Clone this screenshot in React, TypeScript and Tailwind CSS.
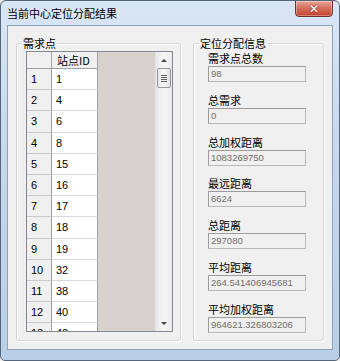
import React from 'react';

const rows = [
  ['1', '1'],
  ['2', '4'],
  ['3', '6'],
  ['4', '8'],
  ['5', '15'],
  ['6', '16'],
  ['7', '17'],
  ['8', '18'],
  ['9', '19'],
  ['10', '32'],
  ['11', '38'],
  ['12', '40'],
  ['13', '43'],
];

const fields = [
  ['需求点总数', '98'],
  ['总需求', '0'],
  ['总加权距离', '1083269750'],
  ['最远距离', '6624'],
  ['总距离', '297080'],
  ['平均距离', '264.541406945681'],
  ['平均加权距离', '964621.326803206'],
];

const cjk = { fontFamily: '"Noto Sans CJK SC", "Noto Sans", sans-serif' };

const GroupBox: React.FC<{ title: string; className: string; children: React.ReactNode }> = ({ title, className, children }) => (
  <div className={`relative border border-[#d5d5d5] rounded-[3px] shadow-[inset_1px_1px_0_#ffffff,1px_1px_0_#ffffff] ${className}`}>
    <span className="absolute left-[5px] top-[-9px] bg-[#f0f0f0] px-[1px] text-[11px] leading-[16px] text-black" style={cjk}>
      {title}
    </span>
    {children}
  </div>
);

const ScrollBar: React.FC = () => (
  <div className="w-[17px] h-full bg-gradient-to-r from-[#e8e8e8] via-[#f6f6f6] to-[#ececec] border-l border-[#e2e2e2] flex flex-col items-center">
    <div className="h-[16px] w-full flex items-center justify-center">
      <div className="w-0 h-0 border-l-[3px] border-r-[3px] border-b-[3px] border-l-transparent border-r-transparent border-b-[#404040]" />
    </div>
    <div className="w-[14px] h-[20px] rounded-[2px] border border-[#989898] bg-gradient-to-r from-[#e6e6e6] via-[#f8f8f8] to-[#dedede] flex flex-col items-center justify-center gap-[1px]">
      <div className="w-[6px] h-[1px] bg-[#606060]" />
      <div className="w-[6px] h-[1px] bg-[#606060]" />
      <div className="w-[6px] h-[1px] bg-[#606060]" />
      <div className="w-[6px] h-[1px] bg-[#606060]" />
    </div>
    <div className="flex-1" />
    <div className="h-[16px] w-full flex items-center justify-center">
      <div className="w-0 h-0 border-l-[3px] border-r-[3px] border-t-[3px] border-l-transparent border-r-transparent border-t-[#404040]" />
    </div>
  </div>
);

const App: React.FC = () => {
  return (
    <div className="w-[340px] h-[361px] bg-[#f0f0f0]">
      <div className="w-[340px] h-[361px] flex flex-col rounded-t-[6px] rounded-b-[5px] border border-[#55657a] bg-gradient-to-b from-[#d9e6f4] via-[#c4d6ec] to-[#b9cfe8] overflow-hidden">
        {/* title bar */}
        <div className="h-[24px] flex items-start">
          <span className="ml-[6px] mt-[5px] text-[11px] leading-[14px] text-black" style={cjk}>
            当前中心定位分配结果
          </span>
          <div className="ml-auto mr-[6px] w-[38px] h-[17px] -mt-[1px] rounded-b-[4px] border border-[#6e3530] bg-gradient-to-b from-[#e8a796] via-[#d26e5a] to-[#c4402c] flex items-center justify-center shadow-[inset_0_0_0_1px_rgba(255,255,255,0.35)]">
            <span className="text-white text-[12px] leading-[12px] font-bold" style={{ fontFamily: '"DejaVu Sans", sans-serif', textShadow: '0 0 2px #5a1a10' }}>
              ✕
            </span>
          </div>
        </div>

        {/* client */}
        <div className="mx-[6px] h-[325px] border border-[#8ea3ba] bg-[#f0f0f0] flex gap-[12px] pl-[8px] pt-[17px]">
          <GroupBox title="需求点" className="w-[165px] h-[298px] pl-[9px] pt-[7px]">
            <div className="w-[147px] h-[281px] border border-[#828790] flex overflow-hidden" style={{ fontFamily: '"Liberation Sans", Arial, sans-serif' }}>
              <div className="flex flex-col w-[71px] bg-white">
                <div className="flex h-[17px] shrink-0 border-b border-[#a0a0a0]">
                  <div className="w-[25px] bg-[#f0f0f0] border-r border-[#a0a0a0]" />
                  <div className="w-[46px] bg-[#f0f0f0] border-r border-[#a0a0a0] text-[11px] leading-[16px] pl-[5px] text-black" style={cjk}>
                    站点ID
                  </div>
                </div>
                {rows.map(([n, v]) => (
                  <div key={n} className="flex h-[21.2px] shrink-0">
                    <div className="w-[25px] bg-[#f0f0f0] border-r border-b border-[#a0a0a0] border-b-[#c8c8c8] text-[11px] leading-[20px] pl-[4px] text-black">
                      {n}
                    </div>
                    <div className="w-[46px] bg-white border-r border-b border-r-[#a0a0a0] border-b-[#d8d8d8] text-[11px] leading-[20px] pl-[4px] text-black">
                      {v}
                    </div>
                  </div>
                ))}
              </div>
              <div className="flex-1 bg-[#d6d3ce]" />
              <ScrollBar />
            </div>
          </GroupBox>

          <GroupBox title="定位分配信息" className="w-[131px] h-[298px] pl-[14px] pt-[3px]">
            <div className="flex flex-col gap-[6.8px]">
              {fields.map(([label, value]) => (
                <div key={label} className="flex flex-col pt-[4px]">
                  <div className="h-[15px] text-[11px] leading-[15px] text-black" style={cjk}>
                    {label}
                  </div>
                  <div
                    className="w-[98px] h-[16px] bg-[#f0f0f0] border border-[#b9b9b9] border-t-[#9c9c9c] border-l-[#9c9c9c] text-[9.5px] leading-[14px] pl-[2px] text-[#6d6d6d] overflow-hidden whitespace-nowrap"
                    style={{ fontFamily: '"Liberation Sans", Arial, sans-serif' }}
                  >
                    {value}
                  </div>
                </div>
              ))}
            </div>
          </GroupBox>
        </div>
        <div className="flex-1" />
      </div>
    </div>
  );
};

export default App;
